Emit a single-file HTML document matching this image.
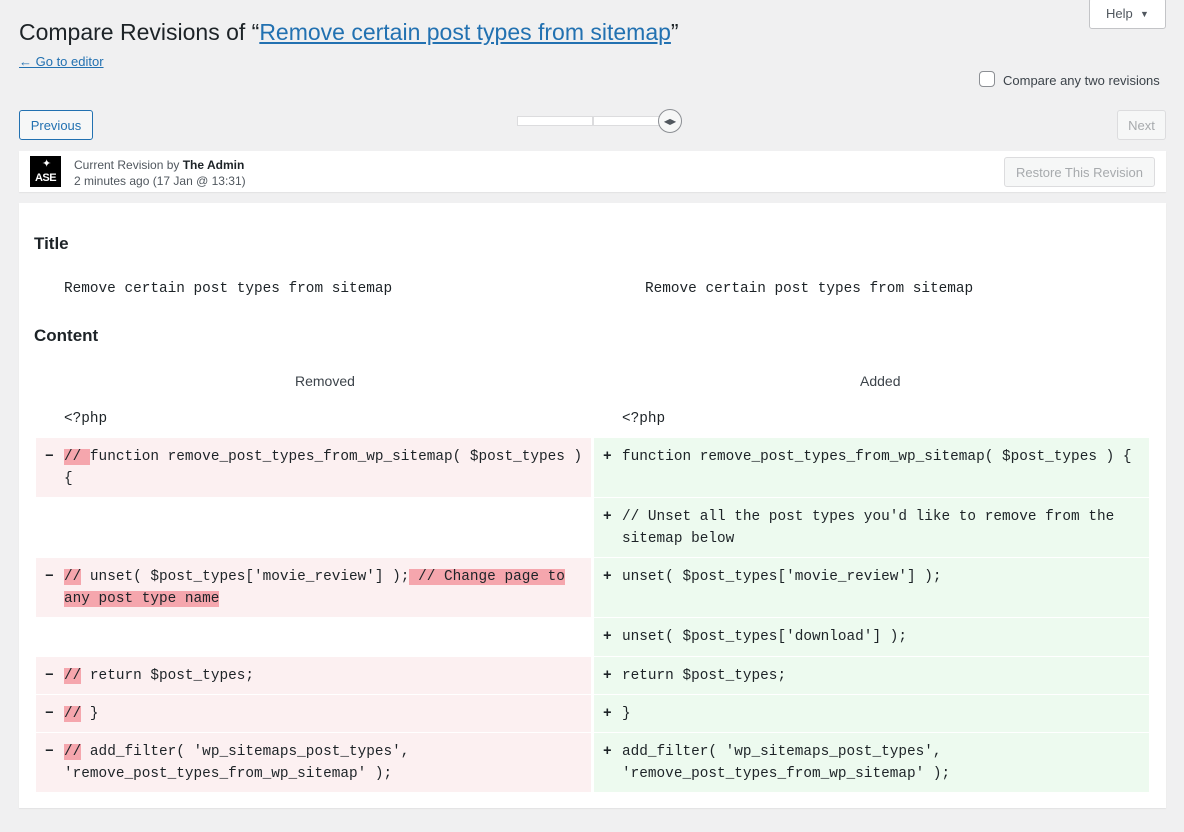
<!DOCTYPE html>
<html><head><meta charset="utf-8"><style>
*{margin:0;padding:0;box-sizing:border-box}
body{width:1184px;height:832px;background:#f0f0f1;font-family:"Liberation Sans",sans-serif;color:#1d2327;position:relative;overflow:hidden}
.a{position:absolute}
.mono{font-family:"Liberation Mono",monospace;font-size:14.4px;line-height:22px;color:#1d2327}
.btn{position:absolute;border:1px solid;border-radius:3px;font-size:13px;display:flex;align-items:center;justify-content:center}
.del{background:#fcf0f1}
.ins{background:#edfaef}
.row{position:absolute}
.row .c{position:absolute;padding:8px 0 0 28px}
.row .s{position:absolute;left:9px;top:8px;font-weight:bold}
.hl{background:#f5a6ad}
</style></head><body>
<div class="a" style="left:19px;top:19px;font-size:23px;">Compare Revisions of “<span style="color:#2271b1;text-decoration:underline">Remove certain post types from sitemap</span>”</div>
<div class="a" style="left:19px;top:54px;font-size:13px;color:#2271b1;text-decoration:underline">← Go to editor</div>
<div class="btn" style="left:1089px;top:-2px;width:77px;height:31px;border-color:#c3c4c7;background:#fff;color:#50575e">Help&nbsp;&nbsp;<span style="font-size:9px">▼</span></div>
<div class="a" style="left:979px;top:71px;width:16px;height:16px;border:1px solid #8c8f94;border-radius:4px;background:#fff"></div>
<div class="a" style="left:1003px;top:73px;font-size:13px;color:#3c434a">Compare any two revisions</div>
<div class="btn" style="left:19px;top:110px;width:74px;height:30px;border-color:#2271b1;background:#f6f7f7;color:#2271b1">Previous</div>
<div class="btn" style="left:1117px;top:110px;width:49px;height:30px;border-color:#dcdcde;background:#f6f7f7;color:#a7aaad">Next</div>
<div class="a" style="left:517px;top:116px;width:76px;height:10px;background:#fff;border:1px solid #dcdcde"></div>
<div class="a" style="left:593px;top:116px;width:70px;height:10px;background:#fff;border:1px solid #dcdcde"></div>
<div class="a" style="left:658px;top:109px;width:24px;height:24px;border-radius:50%;background:#f6f7f7;border:1px solid #8c8f94;font-size:8px;color:#50575e;display:flex;align-items:center;justify-content:center">◀▶</div>
<div class="a" style="left:19px;top:151px;width:1147px;height:41px;background:#fff;box-shadow:0 1px 1px rgba(0,0,0,.06)"></div>
<div class="a" style="left:30px;top:156px;width:31px;height:31px;background:#000;color:#fff;font-size:11px;font-weight:bold;text-align:center;padding-top:16px;letter-spacing:-0.5px">ASE</div>
<div class="a" style="left:42px;top:157px;color:#fff;font-size:11px">✦</div>
<div class="a" style="left:74px;top:157px;font-size:12px;color:#50575e;line-height:16px">Current Revision by <b style="color:#1d2327">The Admin</b><br>2 minutes ago (17 Jan @ 13:31)</div>
<div class="btn" style="left:1004px;top:157px;width:151px;height:30px;border-color:#dcdcde;background:#f6f7f7;color:#a7aaad">Restore This Revision</div>
<div class="a" style="left:19px;top:203px;width:1147px;height:605px;background:#fff;box-shadow:0 1px 1px rgba(0,0,0,.06)"></div>
<div class="a" style="left:34px;top:234px;font-size:17px;font-weight:bold">Title</div>
<div class="a mono" style="left:64px;top:278px">Remove certain post types from sitemap</div>
<div class="a mono" style="left:645px;top:278px">Remove certain post types from sitemap</div>
<div class="a" style="left:34px;top:326px;font-size:17px;font-weight:bold">Content</div>
<div class="a" style="left:295px;top:373px;font-size:14px;color:#3c434a">Removed</div>
<div class="a" style="left:860px;top:373px;font-size:14px;color:#3c434a">Added</div>
<div class="a mono" style="left:64px;top:408px">&lt;?php</div>
<div class="a mono" style="left:622px;top:408px">&lt;?php</div>

<div class="row mono" style="left:36px;top:438px">
<div class="c del" style="left:0;width:555px;height:59px"><span class="s">−</span><span class="hl">// </span>function remove_post_types_from_wp_sitemap( $post_types )<br>{</div>
<div class="c ins" style="left:558px;width:555px;height:59px"><span class="s">+</span>function remove_post_types_from_wp_sitemap( $post_types ) {</div>
</div>
<div class="row mono" style="left:36px;top:498px">
<div class="c ins" style="left:558px;width:555px;height:59px"><span class="s">+</span> // Unset all the post types you'd like to remove from the<br>sitemap below</div>
</div>
<div class="row mono" style="left:36px;top:558px">
<div class="c del" style="left:0;width:555px;height:59px"><span class="s">−</span><span class="hl">//</span> unset( $post_types['movie_review'] );<span class="hl"> // Change page to </span><br><span class="hl">any post type name</span></div>
<div class="c ins" style="left:558px;width:555px;height:59px"><span class="s">+</span> unset( $post_types['movie_review'] );</div>
</div>
<div class="row mono" style="left:36px;top:618px">
<div class="c ins" style="left:558px;width:555px;height:38px"><span class="s">+</span> unset( $post_types['download'] );</div>
</div>
<div class="row mono" style="left:36px;top:657px">
<div class="c del" style="left:0;width:555px;height:37px"><span class="s">−</span><span class="hl">//</span> return $post_types;</div>
<div class="c ins" style="left:558px;width:555px;height:37px"><span class="s">+</span> return $post_types;</div>
</div>
<div class="row mono" style="left:36px;top:695px">
<div class="c del" style="left:0;width:555px;height:37px"><span class="s">−</span><span class="hl">//</span> }</div>
<div class="c ins" style="left:558px;width:555px;height:37px"><span class="s">+</span>}</div>
</div>
<div class="row mono" style="left:36px;top:733px">
<div class="c del" style="left:0;width:555px;height:59px"><span class="s">−</span><span class="hl">//</span> add_filter( 'wp_sitemaps_post_types',<br>'remove_post_types_from_wp_sitemap' );</div>
<div class="c ins" style="left:558px;width:555px;height:59px"><span class="s">+</span>add_filter( 'wp_sitemaps_post_types',<br>'remove_post_types_from_wp_sitemap' );</div>
</div>
</body></html>
